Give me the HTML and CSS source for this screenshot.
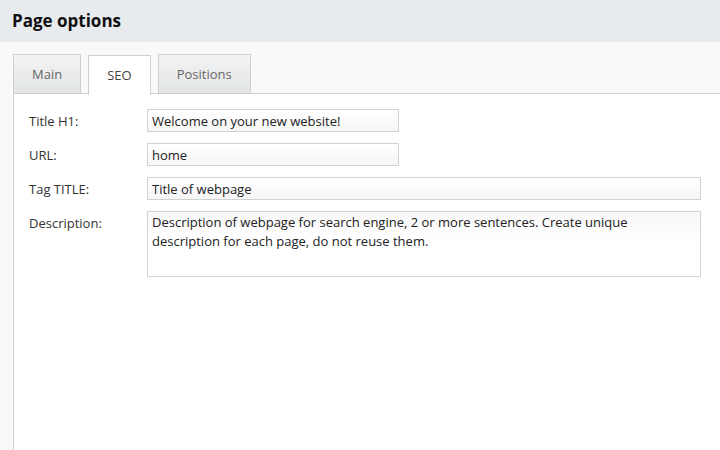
FILE: index.html
```html
<!DOCTYPE html>
<html lang="en">
<head>
  <meta charset="UTF-8">
  <title>Page options</title>
  <link rel="stylesheet" href="styles.css">
</head>
<body>
  <div class="header">Page options</div>

  <div class="content">
    <div class="tabs">
      <div class="tab">Main</div>
      <div class="tab active">SEO</div>
      <div class="tab">Positions</div>
    </div>

    <div class="panel">
      <div class="row">
        <label class="label">Title H1:</label>
        <input class="field short" type="text" value="Welcome on your new website!">
      </div>
      <div class="row">
        <label class="label">URL:</label>
        <input class="field short" type="text" value="home">
      </div>
      <div class="row">
        <label class="label">Tag TITLE:</label>
        <input class="field" type="text" value="Title of webpage">
      </div>
      <div class="row">
        <label class="label">Description:</label>
        <textarea class="field area">Description of webpage for search engine, 2 or more sentences. Create unique description for each page, do not reuse them.</textarea>
      </div>
    </div>
  </div>
</body>
</html>
```

FILE: styles.css
```css
html, body {
  height: 100%;
}

body {
  margin: 0;
  background-color: #f9f9f9;
  font-family: "Open Sans", Arial, sans-serif;
  font-size: 13px;
  color: #333;
  display: flex;
  flex-direction: column;
  overflow: hidden;
}

.header {
  background-color: #e8ebee;
  height: 42px;
  line-height: 41px;
  padding-left: 12px;
  font-size: 17px;
  font-weight: bold;
  color: #111;
}

.content {
  flex: 1;
  display: flex;
  flex-direction: column;
  padding: 12px 0 0 13px;
}

.tabs {
  display: flex;
  gap: 7px;
  height: 39px;
}

.tab {
  border: 1px solid #cfcfcf;
  border-bottom: none;
  background: linear-gradient(#f3f3f3, #e2e5e7);
  color: #666;
  padding: 0 18px;
  line-height: 38px;
}

.tab.active {
  background: #fff;
  color: #444;
  position: relative;
  top: 1px;
  height: 39px;
}

.panel {
  flex: 1;
  background-color: #fff;
  border-top: 1px solid #cfcfcf;
  border-left: 1px solid #cfcfcf;
  padding: 15px 19px 0 15px;
  display: flex;
  flex-direction: column;
  gap: 11px;
}

.row {
  display: flex;
  align-items: flex-start;
}

.label {
  width: 118px;
  flex-shrink: 0;
  height: 22px;
  margin-top: 1px;
  line-height: 23px;
  color: #333;
}

.field {
  flex: 1;
  box-sizing: border-box;
  height: 23px;
  border: 1px solid #d2d2d2;
  background: linear-gradient(#fff, #f6f6f6);
  font-family: "Open Sans", Arial, sans-serif;
  font-size: 13px;
  color: #222;
  padding: 0 4px;
  margin: 0;
  outline: none;
}

.field.short {
  flex: none;
  width: 252px;
}

.area {
  height: 66px;
  resize: none;
  padding: 1px 4px;
  line-height: 19px;
  background: linear-gradient(#f7f7f7, #fff 40%);
}
```
